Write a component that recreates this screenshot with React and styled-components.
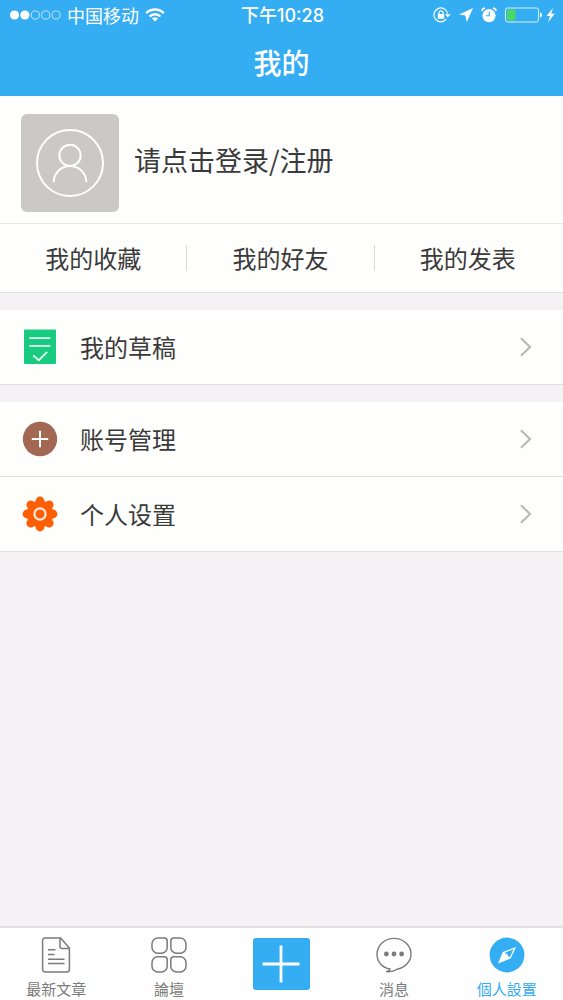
import styled, { createGlobalStyle } from "styled-components"

const GlobalStyle = createGlobalStyle`
    * {
        box-sizing: border-box;
    }
    body {
        margin: 0;
        background: #f4f2f5;
        color: #3a3a3a;
        font-family: "Noto Sans CJK SC", sans-serif;
    }
    button {
        margin: 0;
        padding: 0;
        border: 0;
        background: none;
        color: inherit;
        font: inherit;
        cursor: pointer;
    }
    a {
        color: inherit;
        text-decoration: none;
    }
    svg {
        display: block;
        flex: none;
    }
`
const Page = styled.div`
    min-height: 100vh;
    display: flex;
    flex-direction: column;
`
const Header = styled.header`
    height: 96px;
    background: #35adf3;
    color: #fff;
`
const StatusBar = styled.div`
    height: 30px;
    padding: 0 7px 0 9px;
    display: grid;
    grid-template-columns: 1fr auto 1fr;
    align-items: center;
    font-size: 18px;
    line-height: 28px;
`
const StatusGroup = styled.div`
    display: flex;
    align-items: center;
    justify-content: ${({ $end }) => ($end ? "flex-end" : "flex-start")};
    gap: ${({ $end }) => ($end ? "8px" : "6px")};
`
const Clock = styled.div`
    padding-top: 2px;
    font-family: Inter, "Noto Sans CJK SC", sans-serif;
    font-weight: 500;
`
const Title = styled.h1`
    margin: 0;
    font-size: 28px;
    line-height: 64px;
    font-weight: 500;
    text-align: center;
`
const Main = styled.main`
    flex: 1;
    display: flex;
    flex-direction: column;
    gap: 17px;
`
const Group = styled.section`
    background: #fefefd;
`
const Profile = styled.button`
    width: 100%;
    height: 128px;
    padding: 6px 21px 0;
    display: flex;
    align-items: center;
    gap: 15px;
    border-bottom: 1px solid #e6e6e6;
    font-size: 27px;
    line-height: 32px;
`
const Avatar = styled.span`
    width: 98px;
    height: 98px;
    display: flex;
    align-items: center;
    justify-content: center;
    border-radius: 6px;
    background: #cbc9c8;
`
const LoginText = styled.span`
    padding-bottom: 6px;
`
const Shortcuts = styled.nav`
    height: 69px;
    padding-right: 2px;
    display: flex;
    align-items: center;
    border-bottom: 1px solid #e0e0e0;
`
const Shortcut = styled.a`
    flex: 1;
    height: 26px;
    font-size: 24px;
    line-height: 26px;
    text-align: center;
    & + & {
        border-left: 1px solid #d8d8d8;
    }
`
const MenuRow = styled.button`
    width: 100%;
    height: 75px;
    padding: 0 30px 0 22px;
    display: flex;
    align-items: center;
    gap: 22px;
    border-bottom: 1px solid #e0dfe2;
    font-size: 24px;
    line-height: 32px;
    text-align: left;
`
const RowLabel = styled.span`
    flex: 1;
`
const TabBar = styled.nav`
    position: sticky;
    bottom: 0;
    height: 74px;
    display: flex;
    border-top: 2px solid #e0dfe1;
    background: #fefefe;
`
const Tab = styled.a`
    flex: 1;
    padding-top: 9px;
    display: flex;
    flex-direction: column;
    align-items: center;
    gap: 6px;
    color: ${({ $active }) => ($active ? "#35adf3" : "#7b7b7b")};
    font-family: "Noto Sans CJK TC", sans-serif;
    font-size: 15px;
    line-height: 20px;
`
const AddSlot = styled.div`
    flex: 1;
    padding-top: 10px;
    text-align: center;
`
const AddButton = styled.button`
    width: 57px;
    height: 52px;
    display: inline-flex;
    align-items: center;
    justify-content: center;
    border-radius: 3px;
    background: #35adf3;
`

function Signal() {
    return (
        <svg width="52" height="12" viewBox="0 0 52 12" aria-hidden="true">
            {[0, 1, 2, 3, 4].map((i) =>
                i < 2 ? (
                    <circle key={i} cx={5.5 + i * 10.4} cy="6" r="4.6" fill="#fff" />
                ) : (
                    <circle key={i} cx={5.5 + i * 10.4} cy="6" r="4.1" fill="none" stroke="#fff" strokeOpacity="0.75" strokeWidth="0.9" />
                )
            )}
        </svg>
    )
}

function Wifi() {
    return (
        <svg width="20" height="14" viewBox="0 0 20 14" fill="none" stroke="#fff" strokeWidth="2.4" aria-hidden="true">
            <path d="M1.2 5.2a12.4 12.4 0 0 1 17.6 0" />
            <path d="M4.5 8.5a7.8 7.8 0 0 1 11 0" />
            <path d="M10 13.6l-3-3a4.3 4.3 0 0 1 6 0z" fill="#fff" stroke="none" />
        </svg>
    )
}

function RotationLock() {
    return (
        <svg width="18" height="16" viewBox="0 0 18 16" fill="none" stroke="#fff" aria-hidden="true">
            <path d="M14.6 6.6A6.9 6.9 0 1 0 13.2 12.2" strokeWidth="1.2" />
            <path d="M12 7.2h5.6l-2.8 3.2z" fill="#fff" stroke="none" />
            <rect x="4.8" y="7" width="6.4" height="4.8" rx="0.6" fill="#fff" stroke="none" />
            <path d="M6 7.4V5.8a2 2 0 0 1 4 0v1.6" strokeWidth="1.2" />
        </svg>
    )
}

function LocationArrow() {
    return (
        <svg width="14" height="14" viewBox="0 0 14 14" fill="#fff" aria-hidden="true">
            <path d="M14 0L0 6.4l6.4 1.2L7.8 14z" />
        </svg>
    )
}

function Alarm() {
    return (
        <svg width="16" height="16" viewBox="0 0 16 16" aria-hidden="true">
            <circle cx="8" cy="8.6" r="6.6" fill="#fff" />
            <path d="M1 4.3a2.3 2.3 0 0 1 3.3-3M15 4.3a2.3 2.3 0 0 0-3.3-3" fill="#fff" stroke="#fff" strokeWidth="0.8" />
            <path d="M8.3 4.8v4H5" fill="none" stroke="#35adf3" strokeWidth="1.1" />
        </svg>
    )
}

function Battery() {
    return (
        <svg width="51" height="16" viewBox="0 0 51 16" aria-hidden="true">
            <rect x="0.5" y="1" width="33" height="14" rx="2" fill="none" stroke="#fff" strokeOpacity="0.8" />
            <rect x="2" y="2.5" width="8.5" height="11" rx="1" fill="#4bd964" />
            <path d="M35 5.4c2.6 0.6 2.6 4.6 0 5.2z" fill="#fff" />
            <path d="M48 1l-6.4 8h3.4l-2 6.2 6.8-8.4h-3.6z" fill="#fff" />
        </svg>
    )
}

function Person() {
    return (
        <svg width="68" height="68" viewBox="0 0 68 68" fill="none" stroke="#fff" strokeWidth="2" strokeLinecap="round" aria-hidden="true">
            <circle cx="34" cy="34" r="33" />
            <circle cx="34" cy="26.4" r="10.6" />
            <path d="M17.6 52.4C18.6 43.2 25.4 37 34 37s15.4 6.2 16.4 15.4" />
        </svg>
    )
}

function DraftIcon() {
    return (
        <svg width="36" height="36" viewBox="0 0 36 36" aria-hidden="true">
            <rect x="2" y="0.5" width="32" height="34.5" rx="1" fill="#18cb80" />
            <path d="M7.4 9.2h21M7.4 16.8h21M11.2 26.4l5.6 4.8 8.4-8.4" fill="none" stroke="#e2faef" strokeWidth="1.8" />
        </svg>
    )
}

function AccountIcon() {
    return (
        <svg width="36" height="36" viewBox="0 0 36 36" aria-hidden="true">
            <circle cx="18" cy="18" r="17.2" fill="#a36854" />
            <path d="M9.8 18h16.4M18 9.8v16.4" stroke="#fff" strokeWidth="2" />
        </svg>
    )
}

function SettingsIcon() {
    return (
        <svg width="36" height="36" viewBox="0 0 36 36" fill="#fe5f06" aria-hidden="true">
            <circle cx="18" cy="18" r="13.4" />
            {[0, 45, 90, 135, 180, 225, 270, 315].map((a) => (
                <circle key={a} cx="18" cy="5" r="4.4" transform={`rotate(${a} 18 18)`} />
            ))}
            <circle cx="18" cy="18" r="5.6" stroke="#ffe9dc" strokeWidth="2.2" />
        </svg>
    )
}

function Chevron() {
    return (
        <svg width="13" height="20" viewBox="0 0 13 20" fill="none" stroke="#b9b9b9" strokeWidth="2.2" aria-hidden="true">
            <path d="M1 1.2l9 8.8-9 8.8" />
        </svg>
    )
}

function ArticleIcon() {
    return (
        <svg width="36" height="36" viewBox="0 0 36 36" fill="none" stroke="currentColor" strokeWidth="1.5" aria-hidden="true">
            <path d="M22.6 1H7a2.4 2.4 0 0 0-2.4 2.4v29.2A2.4 2.4 0 0 0 7 35h22a2.4 2.4 0 0 0 2.4-2.4V11z" />
            <path d="M22 1.4v8.2a2 2 0 0 0 2 2h7.2" />
            <path d="M10 12.8h7.5M10 17.6h6.5M10 22.2h16.5M10 26.6h16.5" />
        </svg>
    )
}

function ForumIcon() {
    return (
        <svg width="36" height="36" viewBox="0 0 36 36" fill="none" stroke="currentColor" strokeWidth="1.5" aria-hidden="true">
            <path d="M6.8 1h6.4a3 3 0 0 1 3 3v6.4a5.8 5.8 0 0 1-5.8 5.8H6.8A5.8 5.8 0 0 1 1 10.4V6.8A5.8 5.8 0 0 1 6.8 1z" />
            <path d="M22.8 1h6.4A5.8 5.8 0 0 1 35 6.8v3.6a5.8 5.8 0 0 1-5.8 5.8h-3.6a5.8 5.8 0 0 1-5.8-5.8V4a3 3 0 0 1 3-3z" />
            <path d="M6.8 19.8h6.4a3 3 0 0 1 3 3v6.4a5.8 5.8 0 0 1-5.8 5.8H6.8A5.8 5.8 0 0 1 1 29.2v-3.6a5.8 5.8 0 0 1 5.8-5.8z" />
            <path d="M22.8 19.8h6.4a5.8 5.8 0 0 1 5.8 5.8v3.6a5.8 5.8 0 0 1-5.8 5.8h-3.6a5.8 5.8 0 0 1-5.8-5.8v-6.4a3 3 0 0 1 3-3z" />
        </svg>
    )
}

function MessageIcon() {
    return (
        <svg width="36" height="36" viewBox="0 0 36 36" fill="none" stroke="currentColor" strokeWidth="1.4" aria-hidden="true">
            <path d="M14 32C6.4 30.6 1 24.8 1 17.4 1 8.4 8.6 1.4 18 1.4s17 7 17 15.6c0 7.8-6.4 14-14 15.2-2.8 2-6.8 2.8-11 2.4 2.4-.4 3.8-1.2 4-2.6z" />
            <g fill="currentColor" stroke="none">
                <circle cx="10.4" cy="17" r="2.4" />
                <circle cx="18" cy="17" r="2.4" />
                <circle cx="25.6" cy="17" r="2.4" />
            </g>
        </svg>
    )
}

function CompassIcon() {
    return (
        <svg width="36" height="36" viewBox="0 0 36 36" aria-hidden="true">
            <circle cx="18" cy="18" r="17.4" fill="currentColor" />
            <path d="M27 10L13.8 15 9 26.4l12.6-5z" fill="#fff" />
            <path d="M24.6 12l-8.6 3.8 1.4 2.2 3.4 2.2z" fill="currentColor" />
            <circle cx="17.4" cy="18.4" r="1.4" fill="#fff" />
        </svg>
    )
}

const shortcuts = ["我的收藏", "我的好友", "我的发表"]

function Row({ icon, label }) {
    return (
        <MenuRow type="button">
            {icon}
            <RowLabel>{label}</RowLabel>
            <Chevron />
        </MenuRow>
    )
}

export default function App() {
    return (
        <Page>
            <GlobalStyle />
            <Header>
                <StatusBar>
                    <StatusGroup>
                        <Signal />
                        <span>中国移动</span>
                        <Wifi />
                    </StatusGroup>
                    <Clock>下午10:28</Clock>
                    <StatusGroup $end>
                        <RotationLock />
                        <LocationArrow />
                        <Alarm />
                        <Battery />
                    </StatusGroup>
                </StatusBar>
                <Title>我的</Title>
            </Header>
            <Main>
                <Group>
                    <Profile type="button">
                        <Avatar>
                            <Person />
                        </Avatar>
                        <LoginText>请点击登录/注册</LoginText>
                    </Profile>
                    <Shortcuts>
                        {shortcuts.map((label) => (
                            <Shortcut key={label} href="#">{label}</Shortcut>
                        ))}
                    </Shortcuts>
                </Group>
                <Group>
                    <Row icon={<DraftIcon />} label="我的草稿" />
                </Group>
                <Group>
                    <Row icon={<AccountIcon />} label="账号管理" />
                    <Row icon={<SettingsIcon />} label="个人设置" />
                </Group>
            </Main>
            <TabBar>
                <Tab href="#"><ArticleIcon />最新文章</Tab>
                <Tab href="#"><ForumIcon />論壇</Tab>
                <AddSlot>
                    <AddButton type="button" aria-label="发表">
                        <svg width="38" height="38" viewBox="0 0 38 38" stroke="#fff" strokeWidth="2.8" aria-hidden="true">
                            <path d="M0.5 19h37M19 0.5v37" />
                        </svg>
                    </AddButton>
                </AddSlot>
                <Tab href="#"><MessageIcon />消息</Tab>
                <Tab href="#" $active><CompassIcon />個人設置</Tab>
            </TabBar>
        </Page>
    )
}
